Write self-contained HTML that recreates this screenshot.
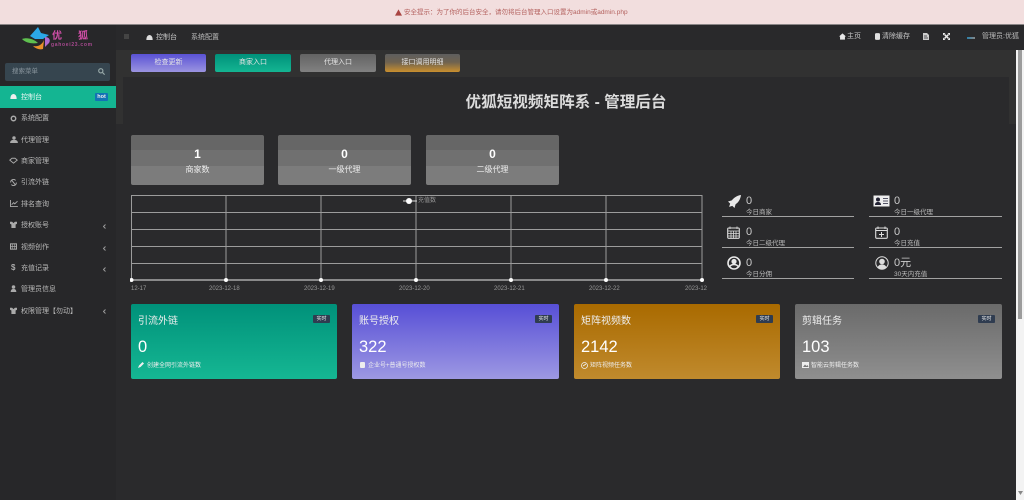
<!DOCTYPE html>
<html lang="zh"><head><meta charset="utf-8"><title>优狐短视频矩阵系 - 管理后台</title>
<style>
*{box-sizing:border-box;margin:0;padding:0}
html,body{width:1024px;height:500px;overflow:hidden;background:#2a2a2c}
body{font-family:"Liberation Sans","Noto Sans CJK SC",sans-serif;position:relative;color:#ddd}
.a{position:absolute;white-space:nowrap}
svg{position:absolute;display:block}
.alert{left:0;top:0;width:1024px;height:25px;background:#f2dede;border-bottom:1px solid #8a8586}
.topnav{left:0;top:25px;width:1024px;height:25px;background:#29292b}
.side{left:0;top:25px;width:116px;height:475px;background:#272729}
.tool{left:116px;top:50px;width:900px;height:27px;background:#313131}
.gutterl{left:116px;top:77px;width:7px;height:47px;background:#313131}
.gutterr{left:1009px;top:77px;width:7px;height:47px;background:#313131}
.menu{left:21px;font-size:7px;color:#b8b8b8;line-height:10px;margin-top:1px}
.btn{top:54px;height:18px;border-radius:2px;color:#e4e4e4;font-size:7px;line-height:18px;text-align:center}
.stat{top:135px;width:133px;height:50px;border-radius:2px;background:linear-gradient(#666 0 30%,#707070 30% 62%,#7c7c7c 62% 100%);text-align:center;color:#fff}
.stat b{position:absolute;left:0;right:0;top:12px;font-size:12px;line-height:14px}
.stat span{position:absolute;left:0;right:0;top:29px;font-size:8px;line-height:12px;color:#eee}
.line{height:1px;background:#a2a2a2;width:132px}
.num{font-size:11px;color:#ccc;line-height:13px}
.sub{font-size:6.5px;color:#bbb;line-height:9px}
.xl{top:283px;font-size:6px;color:#999;line-height:8px;margin-top:1px}
.card{top:304px;height:75px;border-radius:2px;color:#fff}
.card .t{position:absolute;left:7px;top:10px;font-size:10px;line-height:16px;color:#eee}
.card .n{position:absolute;left:7px;top:33px;font-size:16.500px;line-height:20px}
.card .d{position:absolute;left:16px;top:58px;font-size:6px;line-height:9px;color:#eee;white-space:nowrap}
.card .b{position:absolute;right:7px;top:11px;width:17px;height:8px;background:#2f3c50;border-radius:1px;font-size:5px;line-height:8px;text-align:center;color:#eee}
</style></head><body>
<div class="a alert"></div>
<svg style="left:395px;top:9px" width="7" height="7" viewBox="0 0 10 10"><path d="M5 .5L10 9.500H0Z" fill="#a94442"/></svg>
<div class="a" style="left:404px;top:8px;font-size:6.500px;line-height:10px;color:#b4625f">安全提示：为了你的后台安全，请勿将后台管理入口设置为admin或admin.php</div>

<div class="a topnav"></div>
<div class="a side"></div>
<div class="a tool"></div>
<div class="a gutterl"></div>
<div class="a gutterr"></div>

<!-- logo -->
<svg style="left:20px;top:25px" width="50" height="26" viewBox="0 0 50 26">
<path d="M10 11L18 2L21 8L29 10L23 14L15 14Z" fill="#2ba8e8"/>
<path d="M2 14C7 12 14 14 18 18C12 19 6 18 2 14Z" fill="#5fc04f"/>
<path d="M13 21C18 22 22 20 24 15L23 24C20 25 16 24 13 21Z" fill="#e8902a"/>
<path d="M25 12C29 12 31 15 29 18L25 22Z" fill="#b06ad0"/>
</svg>
<div class="a" style="left:52px;top:30px;font-size:10px;line-height:13px;font-weight:bold;color:#d24fa8">优</div>
<div class="a" style="left:78px;top:30px;font-size:10px;line-height:13px;font-weight:bold;color:#d24fa8">狐</div>
<div class="a" style="left:51px;top:42px;font-size:5px;line-height:7px;letter-spacing:.7px;font-weight:bold;color:#a84a90">gahoei23.com</div>

<!-- search -->
<div class="a" style="left:5px;top:63px;width:105px;height:18px;background:#36454f;border-radius:2px"></div>
<div class="a" style="left:12px;top:67px;font-size:6.500px;line-height:10px;color:#8a969e">搜索菜单</div>
<svg style="left:98px;top:68px" width="7" height="7" viewBox="0 0 10 10"><circle cx="4" cy="4" r="3" fill="none" stroke="#9aa" stroke-width="1.600"/><path d="M6.500 6.500L9.500 9.500" stroke="#9aa" stroke-width="1.600"/></svg>

<!-- menu -->
<div class="a" style="left:0;top:86px;width:116px;height:21.500px;background:#14b592"></div>
<svg style="left:10px;top:93px" width="7" height="7" viewBox="0 0 10 10"><path d="M.5 8.500C.5 4 2.500 1.500 5 1.500S9.500 4 9.500 8.500Z" fill="#eee"/></svg>
<div class="a menu" style="top:92px;color:#eaf7f3">控制台</div>
<div class="a" style="left:95px;top:93px;width:13px;height:8px;background:#1273b5;border-radius:1px;font-size:5.500px;line-height:8px;font-weight:bold;text-align:center;color:#eee">hot</div>

<svg style="left:10px;top:115px" width="7" height="7" viewBox="0 0 10 10"><circle cx="5" cy="5" r="3.200" fill="none" stroke="#aaa" stroke-width="2"/></svg>
<div class="a menu" style="top:113px">系统配置</div>
<svg style="left:10px;top:136px" width="8" height="7" viewBox="0 0 10 9"><circle cx="5" cy="2.500" r="2.200" fill="#aaa"/><path d="M0 9C0 6 2 5 5 5S10 6 10 9Z" fill="#aaa"/></svg>
<div class="a menu" style="top:134.500px">代理管理</div>
<svg style="left:9px;top:157px" width="9" height="7" viewBox="0 0 12 9"><path d="M1 4L4 1.500H8L11 4L6 8Z" fill="none" stroke="#aaa" stroke-width="1.200"/></svg>
<div class="a menu" style="top:156px">商家管理</div>
<svg style="left:10px;top:179px" width="7" height="7" viewBox="0 0 10 10"><path d="M2 1L8 9M1 5A4 4 0 0 1 8 2M9 5A4 4 0 0 1 2 8" fill="none" stroke="#aaa" stroke-width="1.300"/></svg>
<div class="a menu" style="top:177px">引流外链</div>
<svg style="left:10px;top:200px" width="8" height="7" viewBox="0 0 10 9"><path d="M.5 0V8.500H10M2 6L4.500 3.500L6 5L9.500 1.500" fill="none" stroke="#aaa" stroke-width="1.200"/></svg>
<div class="a menu" style="top:198.500px">排名查询</div>
<svg style="left:10px;top:221px" width="7" height="7" viewBox="0 0 10 10"><path d="M0 1H3L5 3L7 1H10V4L8 5V10H2V5L0 4Z" fill="#aaa"/></svg>
<div class="a menu" style="top:220px">授权账号</div>
<svg style="left:10px;top:243px" width="7" height="7" viewBox="0 0 10 10"><rect x=".7" y="1.200" width="8.600" height="7.600" fill="none" stroke="#aaa" stroke-width="1.400"/><path d="M3.200 1V9M6.800 1V9M1 5H9" stroke="#aaa"/></svg>
<div class="a menu" style="top:241.500px">视频创作</div>
<div class="a" style="left:11px;top:263px;font-size:8px;line-height:10px;font-weight:bold;color:#aaa">$</div>
<div class="a menu" style="top:263px">充值记录</div>
<svg style="left:10px;top:285px" width="7" height="7" viewBox="0 0 10 10"><circle cx="5" cy="2.800" r="2.500" fill="#aaa"/><path d="M1 10C1 7 2.500 5.500 5 5.500S9 7 9 10Z" fill="#aaa"/></svg>
<div class="a menu" style="top:284px">管理员信息</div>
<svg style="left:10px;top:307px" width="7" height="7" viewBox="0 0 10 10"><path d="M0 1H3L5 3L7 1H10V4L8 5V10H2V5L0 4Z" fill="#aaa"/></svg>
<div class="a menu" style="top:306px">权限管理【勿动】</div>
<svg style="left:103px;top:224px" width="3" height="5" viewBox="0 0 3 5"><path d="M2.500.5L.5 2.500L2.500 4.500" fill="none" stroke="#999"/></svg>
<svg style="left:103px;top:246px" width="3" height="5" viewBox="0 0 3 5"><path d="M2.500.5L.5 2.500L2.500 4.500" fill="none" stroke="#999"/></svg>
<svg style="left:103px;top:267px" width="3" height="5" viewBox="0 0 3 5"><path d="M2.500.5L.5 2.500L2.500 4.500" fill="none" stroke="#999"/></svg>
<svg style="left:103px;top:309px" width="3" height="5" viewBox="0 0 3 5"><path d="M2.500.5L.5 2.500L2.500 4.500" fill="none" stroke="#999"/></svg>

<!-- top nav -->
<div class="a" style="left:124px;top:34px;width:5px;height:5px;background:#444"></div>
<svg style="left:146px;top:34px" width="7" height="7" viewBox="0 0 10 10"><path d="M.5 8.500C.5 4 2.500 1.500 5 1.500S9.500 4 9.500 8.500Z" fill="#ddd"/></svg>
<div class="a" style="left:156px;top:32.500px;font-size:7px;line-height:10px;color:#c8c8c8">控制台</div>
<div class="a" style="left:191px;top:32.500px;font-size:7px;line-height:10px;color:#bbb">系统配置</div>
<svg style="left:839px;top:33px" width="7" height="7" viewBox="0 0 10 10"><path d="M0 5L5 .5L10 5H8.500V9.500H1.500V5Z" fill="#e8e8e8"/></svg>
<div class="a" style="left:847px;top:32px;font-size:7px;line-height:10px;color:#c8c8c8">主页</div>
<svg style="left:875px;top:33px" width="5" height="7" viewBox="0 0 6 8"><rect width="6" height="8" rx="1.500" fill="#e0e0e0"/></svg>
<div class="a" style="left:882px;top:32px;font-size:7px;line-height:10px;color:#c8c8c8">清除缓存</div>
<svg style="left:923px;top:33px" width="6" height="7" viewBox="0 0 6 7"><path d="M0 0H4L6 2V7H0Z" fill="#ccc"/><path d="M1 3H4M1 5H5" stroke="#29292b" stroke-width=".7"/></svg>
<svg style="left:943px;top:33px" width="7" height="7" viewBox="0 0 7 7"><path d="M1.500 1.500L5.500 5.500M5.500 1.500L1.500 5.500" stroke="#eee" stroke-width="1.500"/><path d="M0 0H2.500L0 2.500ZM7 0V2.500L4.500 0ZM0 7V4.500L2.500 7ZM7 7H4.500L7 4.500Z" fill="#eee"/></svg>
<div class="a" style="left:967px;top:37px;width:8px;height:2px;background:linear-gradient(90deg,#2b7fa8,#888)"></div>
<div class="a" style="left:982px;top:32px;font-size:7px;line-height:10px;color:#bbb">管理员:优狐</div>

<!-- toolbar buttons -->
<div class="a btn" style="left:131px;width:75px;background:linear-gradient(#5a52d5,#9b94e0);">检查更新</div>
<div class="a btn" style="left:215px;width:76px;background:linear-gradient(#00917a,#14b592)">商家入口</div>
<div class="a btn" style="left:300px;width:76px;background:linear-gradient(#636363,#818181)">代理入口</div>
<div class="a btn" style="left:385px;width:75px;background:linear-gradient(#5e5e5e 0,#6e6250 45%,#c98f2e 100%)">接口调用明细</div>

<div class="a" style="left:123px;top:92px;width:886px;text-align:center;font-size:15.600px;line-height:22px;font-weight:bold;color:#dcdcdc">优狐短视频矩阵系 - 管理后台</div>

<!-- stats -->
<div class="a stat" style="left:131px"><b>1</b><span>商家数</span></div>
<div class="a stat" style="left:278px"><b>0</b><span>一级代理</span></div>
<div class="a stat" style="left:426px"><b>0</b><span>二级代理</span></div>

<!-- chart -->
<svg style="left:130px;top:194px" width="575" height="90" viewBox="0 0 575 90">
<g stroke="#9c9c9c" stroke-width="1" fill="none">
<path d="M1.500 1.500H572M1.500 18.500H572M1.500 35.500H572M1.500 52.500H572M1.500 69.500H572"/>
<path d="M1.500 1V86M96 1V86M191 1V86M286 1V86M381 1V86M476 1V86M572 1V86"/>
</g>
<path d="M1 86H572" stroke="#e8e8e8" stroke-width="1"/>
<g fill="#fff"><circle cx="1.500" cy="86" r="2"/><circle cx="96" cy="86" r="2"/><circle cx="191" cy="86" r="2"/><circle cx="286" cy="86" r="2"/><circle cx="381" cy="86" r="2"/><circle cx="476" cy="86" r="2"/><circle cx="572" cy="86" r="2"/></g>
<path d="M273 7H287" stroke="#ddd"/><circle cx="279" cy="7" r="3" fill="#fff"/>
</svg>
<div class="a" style="left:418px;top:196.500px;font-size:6px;line-height:8px;color:#999">充值数</div>
<div class="a xl" style="left:131px;top:284px">12-17</div>
<div class="a xl" style="left:209px;top:284px">2023-12-18</div>
<div class="a xl" style="left:304px;top:284px">2023-12-19</div>
<div class="a xl" style="left:399px;top:284px">2023-12-20</div>
<div class="a xl" style="left:494px;top:284px">2023-12-21</div>
<div class="a xl" style="left:589px;top:284px">2023-12-22</div>
<div class="a xl" style="left:685px;top:284px;width:22px;overflow:hidden">2023-12</div>

<!-- right stats -->
<svg style="left:728px;top:195px" width="13" height="13" viewBox="0 0 12 12"><path d="M12 0C8 .5 5 3 3.500 5L0 6L2 8L1 11L4 10L6 12L7 8.500C9.500 7 11.500 4 12 0Z" fill="#e8e8e8"/></svg>
<div class="a num" style="left:746px;top:195px">0</div><div class="a sub" style="left:746px;top:208px">今日商家</div><div class="a line" style="left:722px;top:216px"></div>
<svg style="left:873px;top:195px" width="17" height="12" viewBox="0 0 17 12"><rect x=".5" y=".5" width="16" height="11" fill="#eee"/><circle cx="5" cy="4.500" r="2" fill="#223"/><path d="M2 10C2 8 3 7 5 7S8 8 8 10Z" fill="#223"/><path d="M10 3.500H15M10 6H15M10 8.500H15" stroke="#556"/></svg>
<div class="a num" style="left:894px;top:195px">0</div><div class="a sub" style="left:894px;top:208px">今日一级代理</div><div class="a line" style="left:869px;top:216px;width:133px"></div>

<svg style="left:727px;top:226px" width="13" height="13" viewBox="0 0 13 13"><rect x=".7" y="2" width="11.600" height="10.300" rx="1" fill="none" stroke="#ddd" stroke-width="1.100"/><path d="M.7 5H12.300M3 .5V3M10 .5V3M.7 7.500H12.300M.7 10H12.300M4 5V12M6.500 5V12M9 5V12" stroke="#ddd" stroke-width=".8"/></svg>
<div class="a num" style="left:746px;top:226px">0</div><div class="a sub" style="left:746px;top:239px">今日二级代理</div><div class="a line" style="left:722px;top:247px"></div>
<svg style="left:875px;top:226px" width="13" height="13" viewBox="0 0 13 13"><rect x=".7" y="2" width="11.600" height="10.300" rx="1" fill="none" stroke="#ddd" stroke-width="1.100"/><path d="M.7 4.500H12.300M3 .5V3M10 .5V3M6.500 6V11M4 8.500H9" stroke="#ddd"/></svg>
<div class="a num" style="left:894px;top:226px">0</div><div class="a sub" style="left:894px;top:239px">今日充值</div><div class="a line" style="left:869px;top:247px;width:133px"></div>

<svg style="left:727px;top:256px" width="14" height="14" viewBox="0 0 14 14"><circle cx="7" cy="7" r="6" fill="none" stroke="#e8e8e8" stroke-width="1.600"/><circle cx="7" cy="5.500" r="2.600" fill="#e8e8e8"/><path d="M2.500 11C3.500 9 5 8.500 7 8.500S10.500 9 11.500 11" fill="none" stroke="#e8e8e8" stroke-width="1.600"/></svg>
<div class="a num" style="left:746px;top:257px">0</div><div class="a sub" style="left:746px;top:270px">今日分佣</div><div class="a line" style="left:722px;top:278px"></div>
<svg style="left:875px;top:256px" width="14" height="14" viewBox="0 0 14 14"><circle cx="7" cy="7" r="6.200" fill="none" stroke="#ddd"/><circle cx="7" cy="5.500" r="2.800" fill="#ddd"/><path d="M2.500 11.500C3.500 9 5 8.500 7 8.500S10.500 9 11.500 11.500C10 13 8.500 13.300 7 13.300S4 13 2.500 11.500Z" fill="#ddd"/></svg>
<div class="a num" style="left:894px;top:257px">0元</div><div class="a sub" style="left:894px;top:270px">30天内充值</div><div class="a line" style="left:869px;top:278px;width:133px"></div>

<!-- cards -->
<div class="a card" style="left:131px;width:206px;background:linear-gradient(#00917a,#15b793)"><div class="t">引流外链</div><div class="b">实时</div><div class="n">0</div><div class="d">创建全网引流外链数</div>
<svg style="left:7px;top:58px" width="6" height="6" viewBox="0 0 6 6"><path d="M0 6L1 3.500L4.500 0L6 1.500L2.500 5Z" fill="#eee"/></svg></div>
<div class="a card" style="left:352px;width:207px;background:linear-gradient(#574fd6,#9d98e3)"><div class="t">账号授权</div><div class="b">实时</div><div class="n">322</div><div class="d">企业号+普通号授权数</div>
<svg style="left:8px;top:58px" width="5" height="6" viewBox="0 0 5 6"><rect width="5" height="6" rx="1" fill="#eee"/></svg></div>
<div class="a card" style="left:574px;width:206px;background:linear-gradient(#a96a00,#c08a2d)"><div class="t">矩阵视频数</div><div class="b">实时</div><div class="n">2142</div><div class="d" style="left:16px">矩阵视频任务数</div>
<svg style="left:7px;top:58px" width="7" height="7" viewBox="0 0 7 7"><circle cx="3.500" cy="3.500" r="3" fill="none" stroke="#eee" stroke-width=".8"/><path d="M2 4L5 2" stroke="#eee"/></svg></div>
<div class="a card" style="left:795px;width:207px;background:linear-gradient(#6a6a6a,#8f8f8f)"><div class="t">剪辑任务</div><div class="b">实时</div><div class="n">103</div><div class="d" style="left:16px">智能云剪辑任务数</div>
<svg style="left:7px;top:58px" width="7" height="6" viewBox="0 0 7 6"><rect width="7" height="6" fill="#eee"/><path d="M1 5L3 2.500L4.500 4L5.500 3L6.500 5Z" fill="#777"/></svg></div>

<!-- scrollbar -->
<div class="a" style="left:1016px;top:50px;width:8px;height:450px;background:#f3f3f3"></div>
<div class="a" style="left:1018px;top:50px;width:4px;height:269px;background:#9c9c9c"></div>
<svg style="left:1018px;top:491px" width="5" height="4" viewBox="0 0 5 4"><path d="M0 0H5L2.500 4Z" fill="#888"/></svg>
</body></html>
